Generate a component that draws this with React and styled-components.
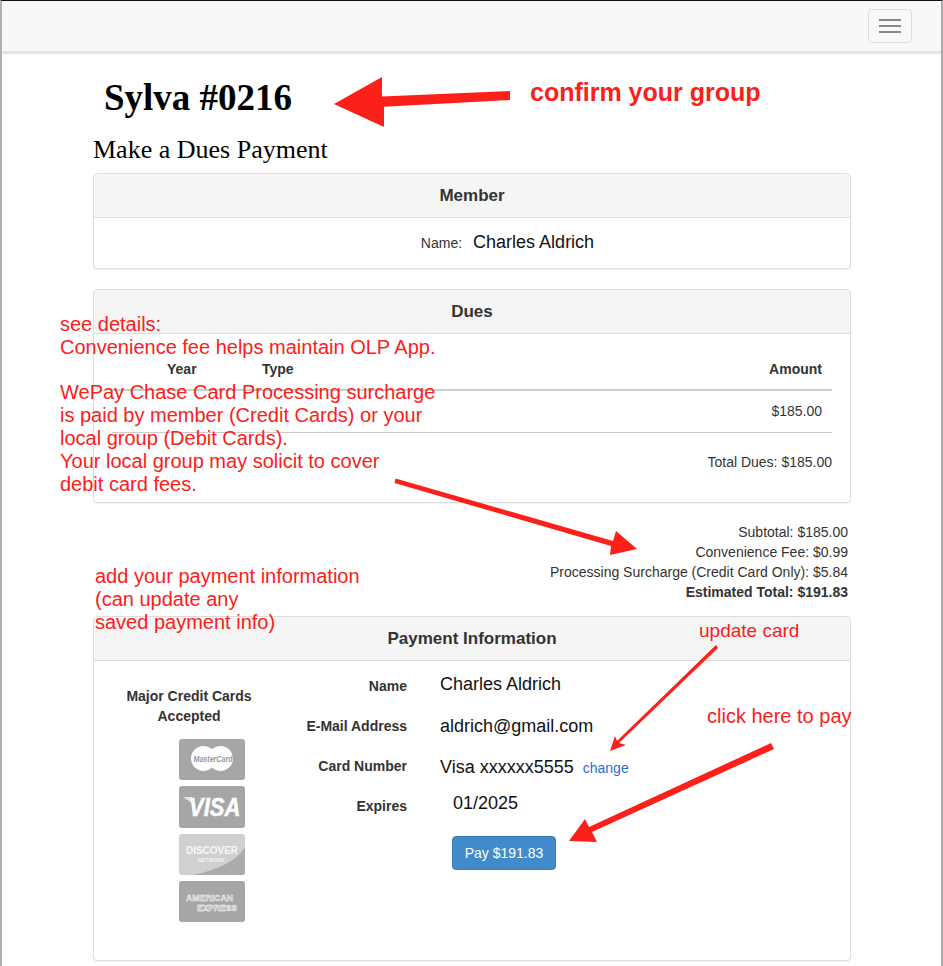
import styled, { createGlobalStyle } from "styled-components";

const GlobalStyle = createGlobalStyle`
  html, body {
    margin: 0;
    padding: 0;
    background: #fff;
  }
  * {
    box-sizing: border-box;
  }
`;

const members = [
  { label: "Name", value: "Charles Aldrich", lift: 4 },
  { label: "E-Mail Address", value: "aldrich@gmail.com", lift: 0 },
  { label: "Card Number", value: "Visa xxxxxx5555", link: "change", lift: -2 },
  { label: "Expires", value: "01/2025", indent: true, lift: 6 },
];

const totals = [
  { text: "Subtotal: $185.00" },
  { text: "Convenience Fee: $0.99" },
  { text: "Processing Surcharge (Credit Card Only): $5.84" },
  { text: "Estimated Total: $191.83", strong: true },
];

const MasterCard = () => (
  <svg width="66" height="41" viewBox="0 0 66 41">
    <rect width="66" height="41" rx="3" fill="#a6a6a6" />
    <circle cx="24.5" cy="19.5" r="12.5" fill="#fff" />
    <circle cx="41.5" cy="19.5" r="12.5" fill="#fff" />
    <text x="14.5" y="22.5" textLength="39" lengthAdjust="spacingAndGlyphs" fontFamily="Liberation Sans" fontSize="8.5" fontStyle="italic" fontWeight="700" fill="#989898">MasterCard</text>
  </svg>
);

const Visa = () => (
  <svg width="66" height="42" viewBox="0 0 66 42">
    <rect width="66" height="42" rx="3" fill="#a6a6a6" />
    <polygon points="4,11 13,11 16,19" fill="#e6e6e6" />
    <text x="10" y="25" transform="scale(1 1.2)" fontFamily="Liberation Sans" fontSize="22" fontStyle="italic" fontWeight="700" fill="#fff" stroke="#fff" strokeWidth="0.4">VISA</text>
  </svg>
);

const Discover = () => (
  <svg width="66" height="41" viewBox="0 0 66 41">
    <rect width="66" height="41" rx="3" fill="#d0d0d0" />
    <path d="M66 13 C58 27 38 36 14 41 H63 a3 3 0 0 0 3 -3 Z" fill="#ababab" />
    <text x="7" y="20" textLength="52" lengthAdjust="spacingAndGlyphs" fontFamily="Liberation Sans" fontSize="11" fontWeight="700" fill="#f7f7f7">DISCOVER</text>
    <text x="19" y="28" textLength="27" lengthAdjust="spacingAndGlyphs" fontFamily="Liberation Sans" fontSize="6" fontWeight="700" fill="#f4f4f4">NETWORK</text>
  </svg>
);

const Amex = () => (
  <svg width="66" height="41" viewBox="0 0 66 41">
    <rect width="66" height="41" rx="3" fill="#a6a6a6" />
    <text x="7" y="20" textLength="47" lengthAdjust="spacingAndGlyphs" fontFamily="Liberation Sans" fontSize="9.5" fontWeight="700" fill="#b4b4b4" stroke="#fff" strokeWidth="0.45">AMERICAN</text>
    <text x="18" y="30" textLength="40" lengthAdjust="spacingAndGlyphs" fontFamily="Liberation Sans" fontSize="9.5" fontWeight="700" fill="#b4b4b4" stroke="#fff" strokeWidth="0.45">EXPRESS</text>
  </svg>
);

const App = () => (
  <Page>
    <GlobalStyle />
    <Navbar>
      <Toggle>
        <i />
        <i />
        <i />
      </Toggle>
    </Navbar>

    <Content>
      <GroupTitle>Sylva #0216</GroupTitle>
      <PageTitle>Make a Dues Payment</PageTitle>

      <Panel>
        <PanelHeading>Member</PanelHeading>
        <MemberBody>
          <small>Name:</small>
          <span>Charles Aldrich</span>
        </MemberBody>
      </Panel>

      <Panel>
        <PanelHeading>Dues</PanelHeading>
        <DuesBody>
          <DuesHead>
            <span>Year</span>
            <span>Type</span>
            <b>Amount</b>
          </DuesHead>
          <DuesRow>$185.00</DuesRow>
          <DuesTotal>Total Dues: $185.00</DuesTotal>
        </DuesBody>
      </Panel>

      <Totals>
        {totals.map((t) => (
          <TotalLine key={t.text} $strong={t.strong}>{t.text}</TotalLine>
        ))}
      </Totals>

      <PaymentPanel>
        <PanelHeading>Payment Information</PanelHeading>
        <PaymentBody>
          <CardsColumn>
            <CardsTitle>Major Credit Cards<br />Accepted</CardsTitle>
            <CardStack>
              <MasterCard />
              <Visa />
              <Discover />
              <Amex />
            </CardStack>
          </CardsColumn>
          <FormColumn>
            {members.map((m) => (
              <FormRow key={m.label}>
                <FormLabel>{m.label}</FormLabel>
                <FormValue $indent={m.indent} $lift={m.lift}>
                  {m.value}
                  {m.link && <ChangeLink href="#">{m.link}</ChangeLink>}
                </FormValue>
              </FormRow>
            ))}
            <PayRow>
              <PayButton>Pay $191.83</PayButton>
            </PayRow>
          </FormColumn>
        </PaymentBody>
      </PaymentPanel>
    </Content>

    <Arrows width="943" height="966" viewBox="0 0 943 966">
      <polygon points="334,104 382,77 382,96.5 510,91 510,100 384,106.7 384,127" />
      <polygon points="395.5,478.5 394.5,483 611,546 610,555 637,549 616,531 613,541" />
      <polygon points="716,645 718,648 619,743 626,745 610,751 615,736 617,741" />
      <polygon points="771,743 774,749 592,832 597,842 569,841 585,819 589,827" />
    </Arrows>

    <BoldNote $x={530} $y={78}>confirm your group</BoldNote>
    <Note $x={60} $y={313}>
      see details:<br />
      Convenience fee helps maintain OLP App.<br />
      <Spacer />
      WePay Chase Card Processing surcharge<br />
      is paid by member (Credit Cards) or your<br />
      local group (Debit Cards).<br />
      Your local group may solicit to cover<br />
      debit card fees.
    </Note>
    <Note $x={95} $y={565}>
      add your payment information<br />
      (can update any<br />
      saved payment info)
    </Note>
    <SmallNote $x={699} $y={620}>update card</SmallNote>
    <Note $x={707} $y={705}>click here to pay</Note>
  </Page>
);

export default App;

const Page = styled.div`
  position: relative;
  width: 943px;
  height: 966px;
  overflow: hidden;
  border-top: 1px solid #111;
  border-left: 2px solid #b0b0b0;
  border-right: 2px solid #aaa;
  font-family: "Liberation Sans", Arial, sans-serif;
  color: #333;
`;

const Navbar = styled.div`
  display: flex;
  justify-content: flex-end;
  align-items: flex-start;
  height: 53px;
  padding: 8px 29px 0 0;
  background: #f8f8f8;
  border-bottom: 3px solid #e4e4e4;
`;

const Toggle = styled.div`
  display: flex;
  flex-direction: column;
  justify-content: center;
  align-items: center;
  gap: 4px;
  width: 44px;
  height: 34px;
  border: 1px solid #ddd;
  border-radius: 4px;

  i {
    display: block;
    width: 22px;
    height: 2px;
    background: #888;
  }
`;

const Content = styled.div`
  padding: 0 90px 0 91px;
`;

const GroupTitle = styled.h1`
  margin: 24px 0 0 11px;
  font: 700 37px/40px "Liberation Serif", "Times New Roman", serif;
  color: #000;
`;

const PageTitle = styled.h2`
  margin: 17px 0 8px 0;
  font: 400 26px/30px "Liberation Serif", "Times New Roman", serif;
  color: #000;
`;

const Panel = styled.section`
  margin-bottom: 20px;
  background: #fff;
  border: 1px solid #ddd;
  border-radius: 4px;
  box-shadow: 0 1px 1px rgba(0, 0, 0, 0.05);
`;

const PanelHeading = styled.div`
  height: 44px;
  background: #f5f5f5;
  border-bottom: 1px solid #ddd;
  border-radius: 3px 3px 0 0;
  font-size: 17px;
  font-weight: 700;
  line-height: 43px;
  text-align: center;
  color: #333;
`;

const MemberBody = styled.div`
  display: flex;
  justify-content: center;
  align-items: baseline;
  gap: 11px;
  height: 50px;
  padding: 14px 0 0 71px;
  color: #111;
  font-size: 18px;
  line-height: 20px;

  small {
    font-size: 14px;
    color: #333;
  }
`;

const DuesBody = styled.div`
  height: 168px;
  padding: 25px 18px 0 18px;
  font-size: 14px;
`;

const DuesHead = styled.div`
  display: grid;
  grid-template-columns: 95px 95px 1fr;
  height: 32px;
  padding: 0 10px 0 55px;
  border-bottom: 2px solid #ccc;
  font-weight: 700;
  line-height: 20px;

  b {
    text-align: right;
  }
`;

const DuesRow = styled.div`
  height: 42px;
  padding: 10px 10px 0 0;
  border-bottom: 1px solid #ccc;
  text-align: right;
  line-height: 20px;
`;

const DuesTotal = styled.div`
  padding-top: 19px;
  text-align: right;
  line-height: 20px;
`;

const Totals = styled.div`
  margin: -1px 0 14px 0;
  padding-right: 3px;
  font-size: 14px;
  line-height: 20px;
  text-align: right;
`;

const TotalLine = styled.div`
  font-weight: ${(p) => (p.$strong ? 700 : 400)};
`;

const PaymentPanel = styled(Panel)`
  height: 345px;
  margin-bottom: 0;
`;

const PaymentBody = styled.div`
  display: flex;
`;

const CardsColumn = styled.div`
  width: 190px;
  padding-top: 25px;
`;

const CardsTitle = styled.div`
  font-size: 14px;
  font-weight: 700;
  line-height: 20px;
  text-align: center;
`;

const CardStack = styled.div`
  display: flex;
  flex-direction: column;
  gap: 6px;
  margin: 13px 0 0 85px;

  svg {
    display: block;
  }
`;

const FormColumn = styled.div`
  flex: 1;
  padding-top: 5px;
`;

const FormRow = styled.div`
  display: flex;
  align-items: center;
  height: 40px;
`;

const FormLabel = styled.div`
  width: 123px;
  font-size: 14px;
  font-weight: 700;
  text-align: right;
`;

const FormValue = styled.div`
  margin-left: ${(p) => (p.$indent ? "46px" : "33px")};
  margin-bottom: ${(p) => Math.max(p.$lift, 0)}px;
  margin-top: ${(p) => Math.max(-p.$lift, 0)}px;
  font-size: 18px;
  color: #111;
`;

const ChangeLink = styled.a`
  margin-left: 9px;
  font-size: 14px;
  color: #2a6fd0;
  text-decoration: none;
`;

const PayRow = styled.div`
  margin: 10px 0 0 168px;
`;

const PayButton = styled.button`
  width: 104px;
  height: 34px;
  padding: 0;
  background: #428bca;
  border: 1px solid #357ebd;
  border-radius: 4px;
  color: #fff;
  font: 400 14px "Liberation Sans", Arial, sans-serif;
`;

const Arrows = styled.svg`
  position: absolute;
  left: -2px;
  top: -1px;
  pointer-events: none;

  polygon {
    fill: #fb2019;
  }
`;

const Note = styled.div`
  position: absolute;
  left: ${(p) => p.$x - 2}px;
  top: ${(p) => p.$y - 1}px;
  color: #fb2019;
  font-size: 20px;
  line-height: 22.8px;
  white-space: nowrap;
`;

const SmallNote = styled(Note)`
  font-size: 19px;
`;

const BoldNote = styled(Note)`
  font-size: 25px;
  font-weight: 700;
  line-height: 28px;
`;

const Spacer = styled.span`
  display: block;
  height: 22.8px;
`;
